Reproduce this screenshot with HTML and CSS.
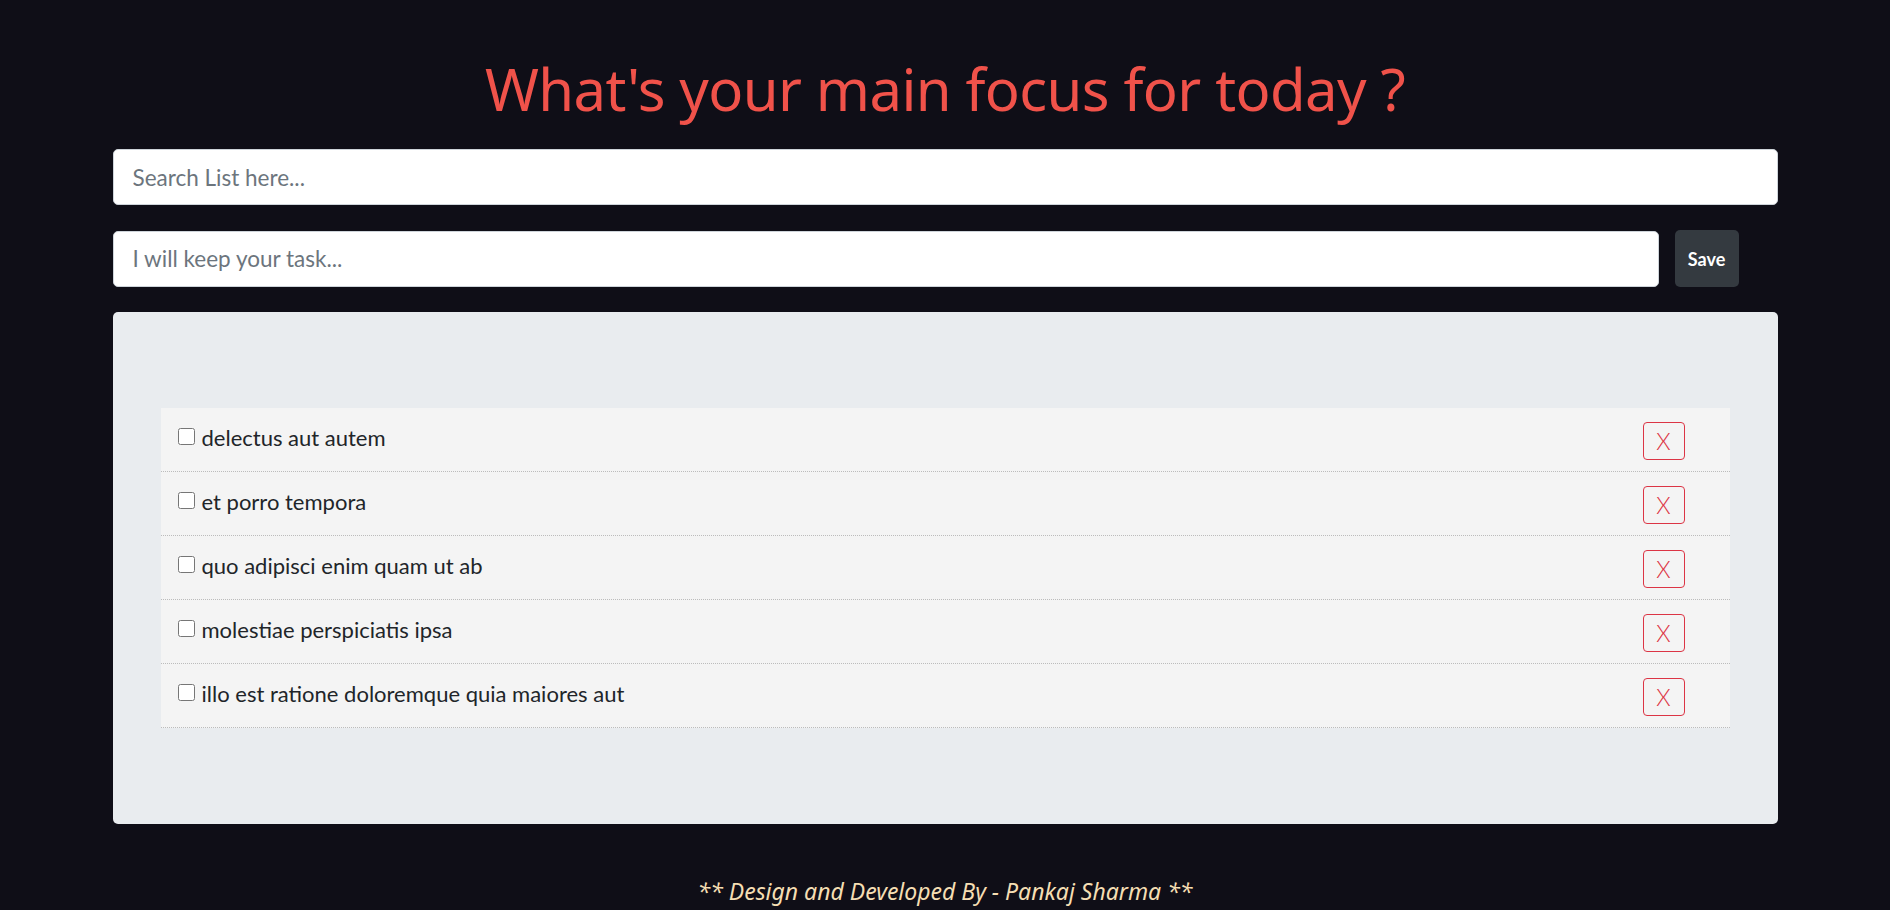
FILE: index.html
```html
<!DOCTYPE html>
<html lang="en">
<head>
<meta charset="utf-8">
<title>Todo</title>
<link rel="stylesheet" href="styles.css">
</head>
<body>
<main class="page">
  <h1 class="title">What's your main focus for today ?</h1>
  <input class="field search" type="text" placeholder="Search List here...">
  <form class="add-row">
    <input class="field task" type="text" placeholder="I will keep your task...">
    <button class="save" type="button">Save</button>
  </form>
  <section class="panel">
    <ul class="list">
      <li class="item"><label class="item-label"><input type="checkbox" class="check"><span>delectus aut autem</span></label><button class="del" type="button">X</button></li>
      <li class="item"><label class="item-label"><input type="checkbox" class="check"><span>et porro tempora</span></label><button class="del" type="button">X</button></li>
      <li class="item"><label class="item-label"><input type="checkbox" class="check"><span>quo adipisci enim quam ut ab</span></label><button class="del" type="button">X</button></li>
      <li class="item"><label class="item-label"><input type="checkbox" class="check"><span>molestiae perspiciatis ipsa</span></label><button class="del" type="button">X</button></li>
      <li class="item"><label class="item-label"><input type="checkbox" class="check"><span>illo est ratione doloremque quia maiores aut</span></label><button class="del" type="button">X</button></li>
    </ul>
  </section>
  <footer class="footer">** Design and Developed By - Pankaj Sharma **</footer>
</main>
</body>
</html>
```
FILE: styles.css
```css
html, body {
  margin: 0;
  padding: 0;
  background: #0f0e17;
}
body {
  font-family: "Lato", "Noto Sans", sans-serif;
  color: #212529;
}
.page {
  width: 1665px;
  margin: 0 auto;
  display: flex;
  flex-direction: column;
}
.title {
  margin: 0 0 25px;
  padding-top: 54px;
  text-align: center;
  font-family: "Noto Sans", sans-serif;
  font-weight: 400;
  font-size: 58px;
  line-height: 70px;
  letter-spacing: -0.6px;
  color: #f0524a;
}
.field {
  box-sizing: border-box;
  height: 56px;
  padding: 12px 19px;
  border: 1px solid #ced4da;
  border-radius: 5px;
  background: #fff;
  font-family: "Lato", sans-serif;
  font-size: 22.5px;
  color: #495057;
  outline: none;
}
.field::placeholder {
  color: #6c757d;
}
.search {
  width: 100%;
}
.add-row {
  display: flex;
  align-items: center;
  margin: 25px 39px 0 0;
}
.task {
  flex: 1;
}
.save {
  margin-left: 16px;
  width: 64px;
  height: 57px;
  border: none;
  border-radius: 5px;
  background: #343a40;
  color: #fff;
  font-family: "Lato", sans-serif;
  font-weight: 700;
  font-size: 18px;
}
.panel {
  margin-top: 25px;
  background: #e9ecef;
  border-radius: 5px;
  padding: 96px 48px;
}
.list {
  list-style: none;
  margin: 0;
  padding: 0;
  background: #f4f4f4;
}
.item {
  display: flex;
  align-items: center;
  justify-content: space-between;
  height: 64px;
  box-sizing: border-box;
  padding: 3px 45px 0 17px;
  border-bottom: 1px dotted #bcbcbc;
}
.item-label {
  display: flex;
  align-items: center;
  margin-top: -7px;
  font-size: 22px;
  color: #212529;
}
.check {
  width: 17px;
  height: 17px;
  margin: -3px 7px 0 0;
}
.del {
  width: 42px;
  height: 38px;
  border: 1px solid #dc3545;
  border-radius: 4px;
  background: transparent;
  color: #dc3545;
  font-family: "Lato", sans-serif;
  font-weight: 300;
  font-size: 23px;
  padding: 0;
}
.footer {
  margin-top: 50px;
  text-align: center;
  font-family: "Noto Sans", sans-serif;
  font-style: italic;
  font-size: 23px;
  line-height: 34px;
  color: #f5deb3;
  padding-bottom: 20px;
}
```
